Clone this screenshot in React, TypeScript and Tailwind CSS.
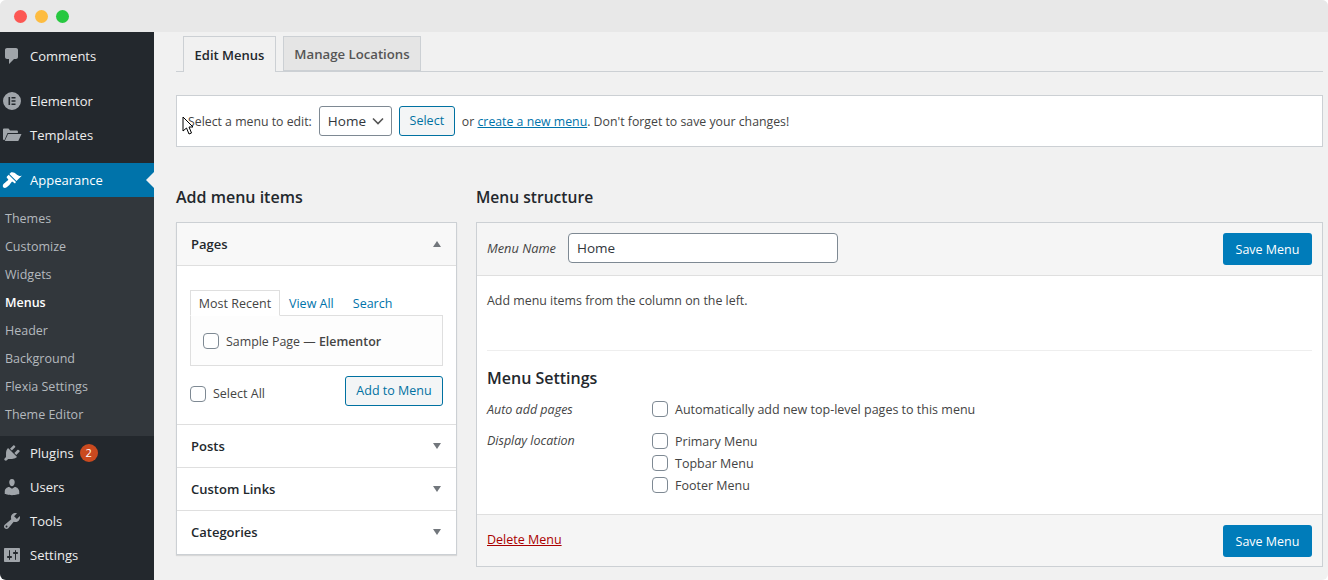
import React from "react";

const font = "font-['Open_Sans','Noto_Sans',sans-serif]";

const I = ({ d, cls = "text-[#a0a5aa]" }: { d: string; cls?: string }) => (
  <svg viewBox="0 0 20 20" className={`w-5 h-5 shrink-0 fill-current ${cls}`}>
    <path d={d} />
  </svg>
);

const paths = {
  comments: "M5 2h9c1.1 0 2 .9 2 2v7c0 1.1-.9 2-2 2h-2l-5 5v-5H5c-1.1 0-2-.9-2-2V4c0-1.1.9-2 2-2z",
  elementor: "M10 1a9 9 0 1 0 0 18a9 9 0 0 0 0-18zM6.5 6h1.6v8H6.5zM9.5 6h4v1.6h-4zM9.5 9.2h4v1.6h-4zM9.5 12.4h4V14h-4z",
  folder: "M1 4.5c0-.5.4-.9.9-.9h4.6l1.6 1.8h6.9c.5 0 .9.4.9.9V8H5.5L2.5 15H1.9c-.5 0-.9-.4-.9-.9zM6 9h13.5l-3.2 7H2.8z",
  appearance: "M14.48 11.06L7.41 3.99l1.5-1.5c.5-.56 2.3-.47 3.51.32 1.21.8 1.43 1.28 2.91 2.1 1.18.64 2.45 1.26 4.45.85zm-.71.71L6.7 4.7 4.93 6.47c-.39.39-.39 1.02 0 1.41l1.06 1.06c.39.39.39 1.03 0 1.42-.6.6-1.43 1.11-2.21 1.69-.35.26-.7.53-1.01.84C1.43 13.23 0 16 1.5 17.5S5.77 16.57 7.11 15.23c.31-.31.58-.66.84-1.01.58-.78 1.09-1.61 1.69-2.21.39-.39 1.02-.39 1.41 0l1.06 1.06c.39.39 1.02.39 1.41 0z",
  plugins: "M13.11 4.36L9.87 7.6 8 5.73l3.24-3.24c.35-.34 1.05-.2 1.56.32.52.51.66 1.21.31 1.55zm-8 1.77l.91-1.12 9.01 9.01-1.19.84c-.71.71-2.63 1.16-3.82 1.16H6.14L4.9 17.26c-.59.59-1.54.59-2.12 0-.59-.58-.59-1.53 0-2.12l1.24-1.24v-3.88c0-1.13.4-3.19 1.09-3.89zm7.26 3.97l3.24-3.24c.34-.35 1.04-.21 1.55.31.52.51.66 1.21.31 1.55l-3.24 3.25z",
  users: "M10 9.25c-2.27 0-2.73-3.44-2.73-3.44C7 4.02 7.82 2 9.97 2c2.16 0 2.98 2.02 2.71 3.81 0 0-.41 3.44-2.68 3.44zm0 2.57L12.72 10c2.39 0 4.52 2.33 4.52 4.53v2.49s-3.65 1.13-7.24 1.13c-3.65 0-7.24-1.13-7.24-1.13v-2.49c0-2.25 1.94-4.48 4.47-4.48z",
  tools: "M16.68 9.77c-1.34 1.34-3.3 1.67-4.95.99l-5.41 6.52c-.99.99-2.59.99-3.58 0s-.99-2.59 0-3.57l6.52-5.42c-.68-1.65-.35-3.61.99-4.95 1.28-1.28 3.12-1.62 4.72-1.06l-2.89 2.89 2.82 2.82 2.86-2.87c.53 1.58.18 3.39-1.08 4.65zM3.81 16.21c.4.39 1.04.39 1.43 0 .4-.4.4-1.04 0-1.43-.39-.4-1.03-.4-1.43 0-.39.39-.39 1.03 0 1.43z",
  settings: "M18 16V4c0-.55-.45-1-1-1H3c-.55 0-1 .45-1 1v12c0 .55.45 1 1 1h14c.55 0 1-.45 1-1zM8 11h1c.55 0 1 .45 1 1s-.45 1-1 1H8v1.5c0 .28-.22.5-.5.5s-.5-.22-.5-.5V13H6c-.55 0-1-.45-1-1s.45-1 1-1h1V5.5c0-.28.22-.5.5-.5s.5.22.5.5V11zm5-2h-1c-.55 0-1-.45-1-1s.45-1 1-1h1V5.5c0-.28.22-.5.5-.5s.5.22.5.5V7h1c.55 0 1 .45 1 1s-.45 1-1 1h-1v5.5c0 .28-.22.5-.5.5s-.5-.22-.5-.5V9z",
};

const Nav = ({ d, label, badge }: { d: string; label: string; badge?: string }) => (
  <div className="h-[34px] flex items-center pl-[2px] text-[#eeeeee]">
    <I d={d} />
    <span className="ml-2 pt-[2px]">{label}</span>
    {badge && (
      <span className="ml-[6px] w-[18px] h-[18px] rounded-full bg-[#ca4a1f] text-white text-[11px] flex items-center justify-center">
        {badge}
      </span>
    )}
  </div>
);

const Sub = ({ label, active }: { label: string; active?: boolean }) => (
  <div className={`h-7 flex items-center pl-[5px] pt-[2px] text-[12.5px] ${active ? "text-white font-semibold" : "text-[#b4b9be]"}`}>
    {label}
  </div>
);

const Check = () => (
  <span className="w-4 h-4 shrink-0 rounded-[4px] border border-[#7e8993] bg-white" />
);

const Caret = ({ up }: { up?: boolean }) => (
  <span
    className={`w-0 h-0 border-x-[4px] border-x-transparent ${up ? "border-b-[6px] border-b-[#72777c]" : "border-t-[6px] border-t-[#72777c]"}`}
  />
);

const AccHead = ({ label, up, last, bg }: { label: string; up?: boolean; last?: boolean; bg?: boolean }) => (
  <div className={`h-[43px] flex items-center justify-between pl-[14px] pr-[15px] border-[#dfdfdf] ${bg ? "bg-[#f8f8f8]" : "bg-white"} ${last ? "pb-px" : "border-b"} font-semibold text-[13px] text-[#23282d]`}>
    <span className="pt-[2px]">{label}</span>
    <Caret up={up} />
  </div>
);

const SaveBtn = () => (
  <button className="w-[89px] h-8 pt-[2px] rounded-[3px] bg-[#007cba] text-white text-[12.5px]">Save Menu</button>
);

const CheckRow = ({ label }: { label: string }) => (
  <div className="h-[22px] flex items-center gap-[7px]">
    <Check />
    <span className="leading-[22px] h-[22px] translate-y-px">{label}</span>
  </div>
);

export default function App() {
  return (
    <div className="w-[1328px] h-[580px] bg-white">
      <div className={`${font} w-full h-full rounded-[6px] overflow-hidden flex flex-col text-[12.5px] text-[#444] bg-[#f1f1f1]`}>
        <div className="h-8 shrink-0 bg-[#e8e8e8] flex items-center gap-2 pl-[14px]">
          <span className="w-[13px] h-[13px] rounded-full bg-[#fc5753]" />
          <span className="w-[13px] h-[13px] rounded-full bg-[#fdbc40]" />
          <span className="w-[13px] h-[13px] rounded-full bg-[#27c840]" />
        </div>
        <div className="flex flex-1 min-h-0">
          {/* sidebar */}
          <aside className="w-[154px] shrink-0 bg-[#23282d] pt-[7px] text-[13px]">
            <Nav d={paths.comments} label="Comments" />
            <div className="h-[11px]" />
            <Nav d={paths.elementor} label="Elementor" />
            <Nav d={paths.folder} label="Templates" />
            <div className="h-[11px]" />
            <div className="relative h-[34px] flex items-center pl-[2px] bg-[#0073aa] text-white">
              <I d={paths.appearance} cls="text-white" />
              <span className="ml-2 pt-[2px]">Appearance</span>
              <span className="absolute right-0 top-[9px] w-0 h-0 border-y-[8px] border-y-transparent border-r-[8px] border-r-[#f1f1f1]" />
            </div>
            <div className="bg-[#32373c] pt-[7px] pb-2">
              <Sub label="Themes" />
              <Sub label="Customize" />
              <Sub label="Widgets" />
              <Sub label="Menus" active />
              <Sub label="Header" />
              <Sub label="Background" />
              <Sub label="Flexia Settings" />
              <Sub label="Theme Editor" />
            </div>
            <Nav d={paths.plugins} label="Plugins" badge="2" />
            <Nav d={paths.users} label="Users" />
            <Nav d={paths.tools} label="Tools" />
            <Nav d={paths.settings} label="Settings" />
          </aside>

          {/* main */}
          <main className="relative flex-1 min-w-0 pl-[22px] pr-[5px] pt-1">
            <div className="flex gap-[7px] pl-[7px] border-b border-[#ccd0d4] h-[36px]">
              <div className="w-[93px] h-[36px] pt-[2px] flex items-center justify-center border border-[#ccd0d4] border-b-0 bg-[#f1f1f1] text-[#23282d] font-semibold text-[13px]">
                Edit Menus
              </div>
              <div className="w-[138px] h-[35px] pt-[2px] flex items-center justify-center border border-[#ccd0d4] bg-[#e5e5e5] text-[#555] font-semibold text-[13.2px]">
                Manage Locations
              </div>
            </div>

            <div className="mt-[23px] h-[52px] bg-white border border-[#ccd0d4] flex items-center pl-[11px] text-[12.3px]">
              <span className="pt-[2px]">Select a menu to edit:</span>
              <div className="ml-[7px] w-[73px] h-[30px] rounded-[3px] border border-[#7e8993] flex items-center justify-between pl-2 pr-[7px] text-[13.5px] text-[#32373c]">
                <span>Home</span>
                <svg viewBox="0 0 12 8" className="w-3 h-2 fill-none stroke-[#555] stroke-[1.6]"><path d="M1 1.5l5 5 5-5" /></svg>
              </div>
              <button className="ml-[7px] w-[56px] h-[30px] pt-px rounded-[3px] border border-[#0071a1] bg-[#f3f5f6] text-[#0071a1] text-[12.5px]">Select</button>
              <span className="ml-[7px] pt-[2px]">or <span className="text-[#0073aa] underline">create a new menu</span>. Don't forget to save your changes!</span>
            </div>

            <div className="grid grid-cols-[281px_847px] gap-[19px]">
              <section>
                <h2 className="mt-[38px] h-[24px] leading-[24px] text-[16px] font-semibold text-[#23282d]">Add menu items</h2>
                <div className="mt-[13px] border border-[#ccd0d4] bg-white shadow-[0_1px_1px_rgba(0,0,0,0.1)]">
                  <AccHead label="Pages" up bg />
                  <div className="h-[159px] px-[13px] pt-6 border-b border-[#dfdfdf]">
                    <div className="flex h-[26px] relative z-10">
                      <div className="w-[90px] h-[26px] pt-[2px] border border-[#dfdfdf] border-b-white bg-white flex items-center justify-center text-[#444]">Most Recent</div>
                      <div className="ml-[9px] pt-[2px] flex items-center text-[#0073aa]">View All</div>
                      <div className="ml-[19px] pt-[2px] flex items-center text-[#0073aa]">Search</div>
                    </div>
                    <div className="-mt-px w-[253px] h-[51px] pt-px border border-[#dfdfdf] flex items-center gap-[7px] pl-3 bg-[#fdfdfd] text-[12.4px]">
                      <Check />
                      <span className="pt-[3px]">Sample Page — <span className="font-semibold">Elementor</span></span>
                    </div>
                    <div className="mt-[10px] w-[253px] flex items-center justify-between">
                      <div className="flex items-center gap-[7px] mt-[6px]"><Check /><span>Select All</span></div>
                      <button className="w-[98px] h-[30px] rounded-[3px] border border-[#0071a1] bg-[#f3f5f6] text-[#0071a1] text-[12.5px]">Add to Menu</button>
                    </div>
                  </div>
                  <AccHead label="Posts" />
                  <AccHead label="Custom Links" />
                  <AccHead label="Categories" last />
                </div>
              </section>

              <section>
                <h2 className="mt-[38px] h-[24px] leading-[24px] text-[15.6px] font-semibold text-[#23282d]">Menu structure</h2>
                <div className="mt-[13px] border border-[#ccd0d4] bg-white">
                  <div className="h-[53px] bg-[#f5f5f5] border-b border-[#dfdfdf] flex items-center pl-[10px] pr-[10px]">
                    <span className="italic w-[81px] text-[12.8px]">Menu Name</span>
                    <div className="w-[270px] h-[30px] -mt-[2px] rounded-[4px] border border-[#7e8993] bg-white flex items-center pl-2 text-[13.5px] text-[#32373c]">Home</div>
                    <div className="ml-auto"><SaveBtn /></div>
                  </div>
                  <div className="h-[238px] px-[10px] pt-4">
                    <p className="h-[18px] leading-[18px] text-[12.4px]">Add menu items from the column on the left.</p>
                    <div className="mt-[40px] h-px bg-[#eeeeee]" />
                    <h3 className="mt-[17px] h-[20px] leading-[20px] text-[16px] font-semibold text-[#23282d]">Menu Settings</h3>
                    <div className="mt-[10px] flex h-[22px] items-center">
                      <span className="w-[165px] italic pt-[2px]">Auto add pages</span>
                      <CheckRow label="Automatically add new top-level pages to this menu" />
                    </div>
                    <div className="mt-[10px] flex">
                      <span className="w-[165px] italic pt-[2px]">Display location</span>
                      <div className="flex flex-col">
                        <CheckRow label="Primary Menu" />
                        <CheckRow label="Topbar Menu" />
                        <CheckRow label="Footer Menu" />
                      </div>
                    </div>
                  </div>
                  <div className="h-[52px] bg-[#f5f5f5] border-t border-[#dfdfdf] flex items-center justify-between px-[10px]">
                    <span className="-mt-[1px] text-[#a00] underline">Delete Menu</span>
                    <div className="mt-px"><SaveBtn /></div>
                  </div>
                </div>
              </section>
            </div>

            <svg viewBox="0 0 12 19" className="absolute left-[28px] top-[84px] w-3 h-[19px]">
              <path d="M1 1v14l3.5-3 2.5 6 2.5-1-2.5-6H11z" fill="#fff" stroke="#000" strokeWidth="1" />
            </svg>
          </main>
        </div>
      </div>
    </div>
  );
}
